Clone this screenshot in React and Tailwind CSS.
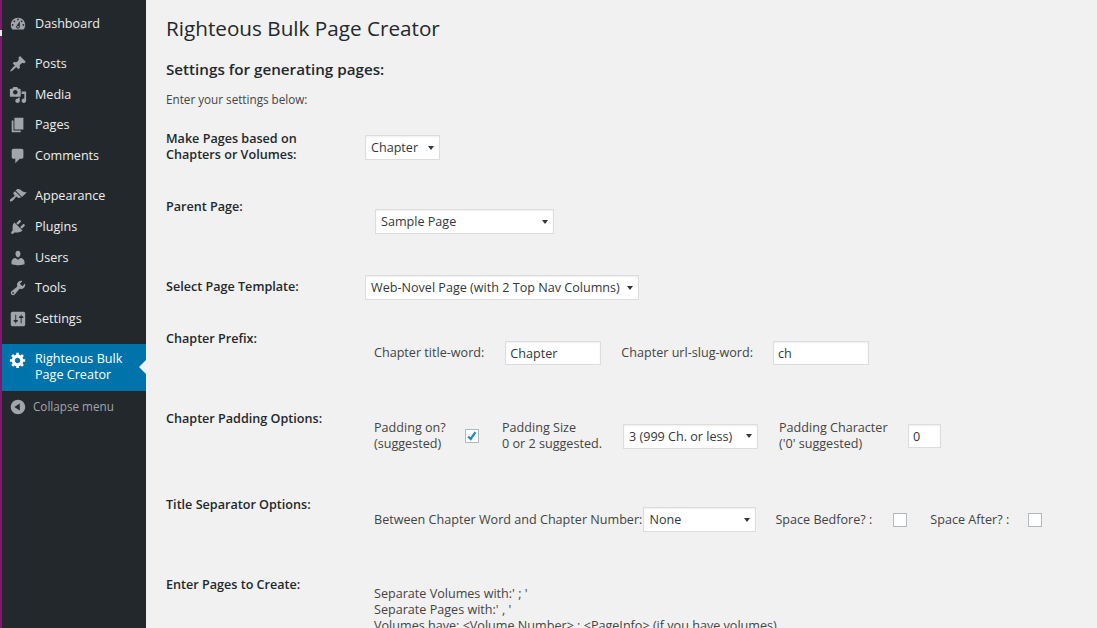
import React from "react";

const icons = {
  dashboard:
    "M3.76 16h12.48c1.1-1.37 1.76-3.11 1.76-5 0-4.42-3.58-8-8-8s-8 3.58-8 8c0 1.89.66 3.63 1.76 5zM10 4c.55 0 1 .45 1 1s-.45 1-1 1-1-.45-1-1 .45-1 1-1zM6 6c.55 0 1 .45 1 1s-.45 1-1 1-1-.45-1-1 .45-1 1-1zm8 0c.55 0 1 .45 1 1s-.45 1-1 1-1-.45-1-1 .45-1 1-1zm-5.37 5.55L12 7v6c0 1.1-.9 2-2 2s-2-.9-2-2c0-.57.24-1.08.63-1.45zM4 10c.55 0 1 .45 1 1s-.45 1-1 1-1-.45-1-1 .45-1 1-1zm12 0c.55 0 1 .45 1 1s-.45 1-1 1-1-.45-1-1 .45-1 1-1zm-5 3c0-.55-.45-1-1-1s-1 .45-1 1 .45 1 1 1 1-.45 1-1z",
  posts:
    "M10.44 3.02l1.82-1.82 6.36 6.35-1.83 1.82c-1.05-.68-2.48-.57-3.41.36l-.75.75c-.92.93-1.04 2.35-.35 3.41l-1.83 1.82-2.41-2.41-2.8 2.79c-.42.42-3.38 2.71-3.8 2.29s1.86-3.39 2.28-3.81l2.79-2.79L4.1 9.36l1.83-1.82c1.05.69 2.48.57 3.4-.36l.75-.75c.93-.92 1.05-2.35.36-3.41z",
  media:
    "M13 11V4c0-.55-.45-1-1-1h-1.67L9 1H5L3.67 3H2c-.55 0-1 .45-1 1v7c0 .55.45 1 1 1h10c.55 0 1-.45 1-1zM7 4.5c1.38 0 2.5 1.12 2.5 2.5S8.38 9.5 7 9.5 4.5 8.38 4.5 7 5.62 4.5 7 4.5zM14 6h5v10.5c0 1.38-1.12 2.5-2.5 2.5S14 17.88 14 16.5s1.12-2.5 2.5-2.5c.17 0 .34.02.5.05V9h-3V6zm-4 8.05V13h2v3.5c0 1.38-1.12 2.5-2.5 2.5S7 17.88 7 16.5 8.12 14 9.5 14c.17 0 .34.02.5.05z",
  pages: "M6 15V2h10v13H6zm-1 1h8v2H3V5h2v11z",
  comments:
    "M5 2h9c1.1 0 2 .9 2 2v7c0 1.1-.9 2-2 2h-2l-5 5v-5H5c-1.1 0-2-.9-2-2V4c0-1.1.9-2 2-2z",
  appearance:
    "M14.48 11.06L7.41 3.99l1.5-1.5c.5-.56 2.3-.47 3.51.32 1.21.8 1.43 1.28 2.91 2.1 1.18.64 2.45 1.26 4.45.85zm-.71.71L6.7 4.7 4.93 6.47c-.39.39-.39 1.02 0 1.41l1.06 1.06c.39.39.39 1.03 0 1.42-.6.6-1.43 1.11-2.21 1.69-.35.26-.7.53-1.01.84C1.43 13.23.4 14.98 1.2 15.8c.8.79 2.56-.23 3.91-1.57.31-.31.58-.66.85-1.02.57-.78 1.08-1.61 1.69-2.21.39-.39 1.02-.39 1.41 0l1.06 1.06c.39.39 1.02.39 1.41 0z",
  plugins:
    "M13.11 4.36L9.87 7.6 8 5.73l3.24-3.24c.35-.34 1.05-.2 1.56.32.52.51.66 1.21.31 1.55zm-8 1.77l.91-1.12 9.01 9.01-1.19.84c-.71.71-2.63 1.16-3.82 1.16H6.14L4.9 17.26c-.59.59-1.54.59-2.12 0-.59-.58-.59-1.53 0-2.12l1.24-1.24v-3.88c0-1.13.4-3.19 1.09-3.89zm7.26 3.97l3.24-3.24c.34-.35 1.04-.21 1.55.31.52.51.66 1.21.31 1.55l-3.24 3.25z",
  users:
    "M10 9.25c-2.27 0-2.73-3.44-2.73-3.44C7 4.02 7.82 2 9.97 2c2.16 0 2.98 2.02 2.71 3.81 0 0-.41 3.44-2.68 3.44zm0 2.57L12.72 10c2.39 0 4.52 2.33 4.52 4.53v2.49s-3.65 1.13-7.24 1.13c-3.65 0-7.24-1.13-7.24-1.13v-2.49c0-2.25 1.94-4.48 4.47-4.48z",
  tools:
    "M16.68 9.77c-1.34 1.34-3.3 1.67-4.95.99l-5.41 6.52c-.99.99-2.59.99-3.58 0s-.99-2.59 0-3.57l6.52-5.42c-.68-1.65-.35-3.61.99-4.95 1.28-1.28 3.12-1.62 4.72-1.06l-2.89 2.89 2.82 2.82 2.86-2.87c.53 1.58.18 3.39-1.08 4.65zM3.81 16.21c.4.39 1.04.39 1.43 0 .4-.4.4-1.04 0-1.43-.39-.4-1.03-.4-1.43 0-.39.39-.39 1.03 0 1.43z",
  settings:
    "M18 16V4c0-1.1-.9-2-2-2H4c-1.1 0-2 .9-2 2v12c0 1.1.9 2 2 2h12c1.1 0 2-.9 2-2zM8 11h1c.55 0 1 .45 1 1s-.45 1-1 1H8v1.5c0 .28-.22.5-.5.5s-.5-.22-.5-.5V13H6c-.55 0-1-.45-1-1s.45-1 1-1h1V5.5c0-.28.22-.5.5-.5s.5.22.5.5V11zm5-2h-1c-.55 0-1-.45-1-1s.45-1 1-1h1V5.5c0-.28.22-.5.5-.5s.5.22.5.5V7h1c.55 0 1 .45 1 1s-.45 1-1 1h-1v5.5c0 .28-.22.5-.5.5s-.5-.22-.5-.5V9z",
  generic:
    "M18 12h-2.18c-.17.7-.44 1.35-.81 1.93l1.54 1.54-2.1 2.1-1.54-1.54c-.58.36-1.23.63-1.91.79V19H8v-2.18c-.68-.16-1.33-.43-1.91-.79l-1.54 1.54-2.12-2.12 1.54-1.54c-.36-.58-.63-1.23-.79-1.91H1V9.03h2.17c.16-.7.44-1.35.8-1.94L2.43 5.55l2.1-2.1 1.54 1.54c.58-.37 1.24-.64 1.93-.81V2h3v2.18c.68.16 1.33.43 1.91.79l1.54-1.54 2.12 2.12-1.54 1.54c.36.59.64 1.24.8 1.94H18V12zm-8.5 1.5c1.66 0 3-1.34 3-3s-1.34-3-3-3-3 1.34-3 3 1.34 3 3 3z",
  collapse: "M10 2c4.42 0 8 3.58 8 8s-3.58 8-8 8-8-3.58-8-8 3.58-8 8-8zm2 12V6l-6 4z",
};

const Icon = ({ name, className = "" }) => (
  <svg viewBox="0 0 20 20" fill="currentColor" className={`h-[18px] w-[18px] shrink-0 ${className}`}>
    <path d={icons[name]} />
  </svg>
);

const MenuItem = ({ icon, label, className = "" }) => (
  <div className={`flex h-[30px] items-center pl-[7px] text-[12.6px] leading-[16px] text-[#eeeeee] ${className}`}>
    <Icon name={icon} className="text-[#a0a5aa]" />
    <span className="ml-[8px]">{label}</span>
  </div>
);

const Sidebar = () => (
  <aside className="relative h-full w-[146px] shrink-0 border-l-2 border-[#82186e] bg-[#23282d] pt-[9px]">
    <div className="absolute left-[-2px] top-[30px] h-[6px] w-[2px] bg-[#e8e8e8]" />
    <MenuItem icon="dashboard" label="Dashboard" />
    <MenuItem icon="posts" label="Posts" className="mt-[10px]" />
    <MenuItem icon="media" label="Media" className="mt-[1px]" />
    <MenuItem icon="pages" label="Pages" />
    <MenuItem icon="comments" label="Comments" className="mt-[1px]" />
    <MenuItem icon="appearance" label="Appearance" className="mt-[10px]" />
    <MenuItem icon="plugins" label="Plugins" className="mt-[1px]" />
    <MenuItem icon="users" label="Users" className="mt-[1px]" />
    <MenuItem icon="tools" label="Tools" />
    <MenuItem icon="settings" label="Settings" className="mt-[1px]" />
    <div className="relative mt-[10px] flex h-[47px] items-start bg-[#0073aa] pl-[7px] text-[12.6px] leading-[16px] text-white">
      <Icon name="generic" className="mt-[7px] text-white" />
      <span className="ml-[8px] mt-[7px]">
        Righteous Bulk
        <br />
        Page Creator
      </span>
      <div className="absolute right-0 top-[16px] h-0 w-0 border-y-[7px] border-r-[7px] border-y-transparent border-r-[#f1f1f1]" />
    </div>
    <div className="flex h-[32px] items-center pl-[7px] text-[11.7px] text-[#a0a5aa]">
      <Icon name="collapse" className="text-[#a0a5aa]" />
      <span className="ml-[6px]">Collapse menu</span>
    </div>
  </aside>
);

const Select = ({ value, className = "" }) => (
  <div className={`flex h-[25px] shrink-0 items-center justify-between whitespace-nowrap border border-[#dddddd] bg-white pl-[5px] pr-[5px] text-[12.6px] text-[#32373c] shadow-[inset_0_1px_2px_rgba(0,0,0,0.07)] ${className}`}>
    <span className="pt-[2px]">{value}</span>
    <span className="h-0 w-0 border-x-[3px] border-t-[4px] border-x-transparent border-t-[#32373c]" />
  </div>
);

const TextBox = ({ value, className = "" }) => (
  <div className={`flex h-[24px] shrink-0 items-center border border-[#dddddd] bg-white pl-[4px] pt-[2px] text-[12.6px] text-[#32373c] shadow-[inset_0_1px_2px_rgba(0,0,0,0.07)] ${className}`}>
    {value}
  </div>
);

const Checkbox = ({ checked }) => (
  <div className="flex h-[14px] w-[14px] shrink-0 items-center justify-center border border-[#b4b9be] bg-white">
    {checked && (
      <svg viewBox="0 0 14 14" className="h-[14px] w-[14px] text-[#1e8cbe]" fill="none" stroke="currentColor" strokeWidth="2.6">
        <path d="M2.5 7.5 L5.5 10.5 L11 2.5" />
      </svg>
    )}
  </div>
);

const Row = ({ label, height, children }) => (
  <div className="flex" style={{ height }}>
    <div className="w-[200px] shrink-0 text-[12.6px] font-semibold leading-[16px] text-[#23282d]">
      {label}
    </div>
    <div className="min-w-0 flex-1">{children}</div>
  </div>
);

export default function App() {
  return (
    <div className="flex h-[628px] w-[1097px] overflow-hidden bg-[#f1f1f1] font-['Open_Sans',sans-serif] text-[12.6px] text-[#444444]">
      <Sidebar />
      <main className="min-w-0 flex-1 pl-[20px]">
        <h1 className="pt-[14px] text-[20.7px] leading-[29px] text-[#23282d]">Righteous Bulk Page Creator</h1>
        <h2 className="mt-[16px] text-[15.2px] font-semibold leading-[20px] text-[#23282d]">Settings for generating pages:</h2>
        <p className="mt-[13px] text-[11.7px] leading-[14px]">Enter your settings below:</p>

        <div className="mt-[25px]">
          <Row label={<>Make Pages based on<br />Chapters or Volumes:</>} height={68}>
            <Select value="Chapter" className="ml-[-1px] mt-[4px] w-[75px]" />
          </Row>
          <Row label="Parent Page:" height={80}>
            <Select value="Sample Page" className="ml-[9px] mt-[10px] w-[179px]" />
          </Row>
          <Row label="Select Page Template:" height={52}>
            <Select value="Web-Novel Page (with 2 Top Nav Columns)" className="ml-[-1px] mt-[-4px] w-[274px]" />
          </Row>
          <Row label="Chapter Prefix:" height={80}>
            <div className="ml-[8px] mt-[10px] flex items-center">
              <span>Chapter title-word:</span>
              <TextBox value="Chapter" className="ml-[21px] w-[96px]" />
              <span className="ml-[20px]">Chapter url-slug-word:</span>
              <TextBox value="ch" className="ml-[20px] w-[96px]" />
            </div>
          </Row>
          <Row label="Chapter Padding Options:" height={86}>
            <div className="ml-[8px] mt-[9px] flex items-center leading-[16px]">
              <span className="w-[91px]">Padding on?<br />(suggested)</span>
              <Checkbox checked />
              <span className="ml-[23px] w-[121px]">Padding Size<br />0 or 2 suggested.</span>
              <Select value="3 (999 Ch. or less)" className="w-[135px]" />
              <span className="ml-[21px] w-[129px]">Padding Character<br />('0' suggested)</span>
              <TextBox value="0" className="w-[33px]" />
            </div>
          </Row>
          <Row label="Title Separator Options:" height={80}>
            <div className="ml-[8px] mt-[10px] flex items-center">
              <span className="pt-[2px]">Between Chapter Word and Chapter Number:</span>
              <Select value="None" className="ml-[1px] w-[113px]" />
              <span className="ml-[19px] pt-[2px]">Space Bedfore? :</span>
              <span className="ml-[21px]"><Checkbox /></span>
              <span className="ml-[23px] pt-[2px]">Space After? :</span>
              <span className="ml-[19px]"><Checkbox /></span>
            </div>
          </Row>
          <Row label="Enter Pages to Create:" height={60}>
            <div className="ml-[8px] mt-[9px] whitespace-nowrap leading-[16px]">
              <div>Separate Volumes with:' ; '</div>
              <div>Separate Pages with:' , '</div>
              <div>{"Volumes have: <Volume Number> : <PageInfo> (if you have volumes)"}</div>
            </div>
          </Row>
        </div>
      </main>
    </div>
  );
}
